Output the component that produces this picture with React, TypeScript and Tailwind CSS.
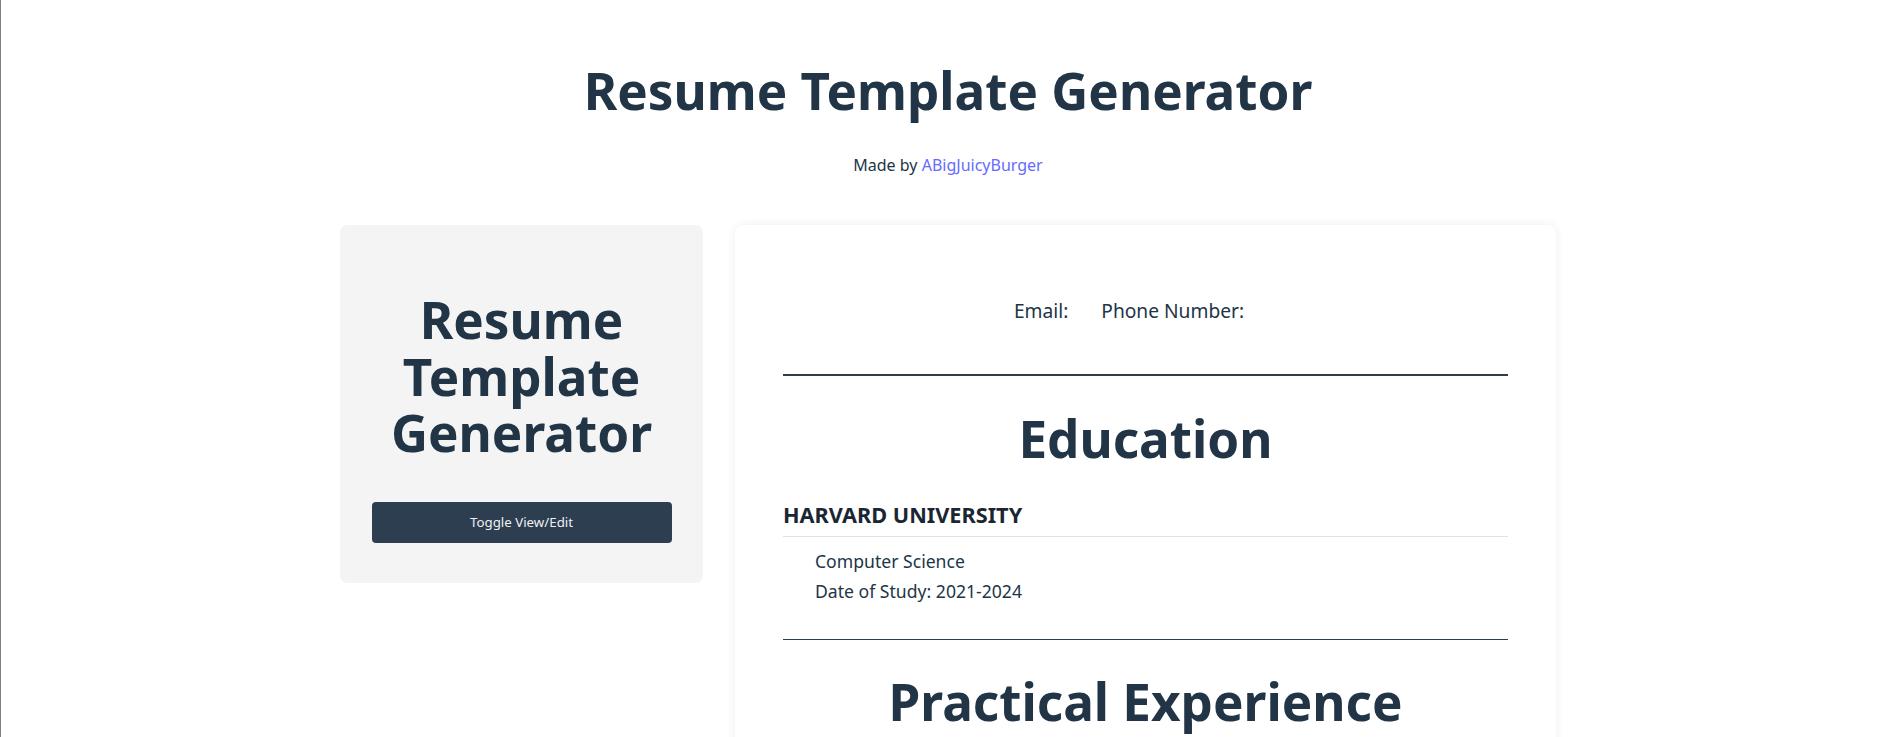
import { useState } from "react";

type School = {
  name: string;
  title: string;
  dates: string;
};

const schools: School[] = [
  {
    name: "HARVARD UNIVERSITY",
    title: "Computer Science",
    dates: "2021-2024",
  },
];

function SideBar({ onToggle }: { onToggle: () => void }) {
  return (
    <div className="flex w-[363px] shrink-0 flex-col items-center rounded-lg bg-[#f4f4f4] px-8 pt-[66px] pb-10">
      <h1 className="text-center text-[51.2px] font-bold leading-[1.1] text-[#213547]">
        Resume Template Generator
      </h1>
      <button
        type="button"
        onClick={onToggle}
        className="mt-[42px] h-[41px] w-[300px] rounded bg-[#2c3e50] text-[13.3px] text-[#f0f0f0]"
      >
        Toggle View/Edit
      </button>
    </div>
  );
}

function Resume() {
  return (
    <div className="w-[821px] shrink-0 rounded-lg bg-white px-12 pt-[72px] pb-10 shadow-[0_0_10px_rgba(0,0,0,0.07)]">
      {/* contact row, third slot (address) is empty */}
      <div className="flex justify-center gap-[33px] text-[19.2px] leading-[1.5] text-[#213547]">
        <span>Email:</span>
        <span>Phone Number:</span>
        <span></span>
      </div>

      <div className="mt-[48px] h-[2px] bg-[#2c3e50]" />

      <h1 className="mt-[34px] text-center text-[51.2px] font-bold leading-[1.1] text-[#213547]">
        Education
      </h1>

      {schools.map((s) => (
        <div key={s.name} className="mt-[33px]">
          <h3 className="border-b border-[#e2e2e2] pb-1 text-[21.7px] font-bold leading-[1.5] text-[#1b2633]">
            {s.name}
          </h3>
          <div className="mt-[9px] pl-8 text-[17.6px] leading-[30px] text-[#213547]">
            <p>{s.title}</p>
            <p>Date of Study: {s.dates}</p>
          </div>
        </div>
      ))}

      <div className="mt-[33px] h-px bg-[#2c3e50]" />

      <h1 className="mt-[33px] text-center text-[51.2px] font-bold leading-[1.1] text-[#213547]">
        Practical Experience
      </h1>
      <div className="h-40" />
    </div>
  );
}

export default function App() {
  const [editing, setEditing] = useState(false);

  return (
    <div
      className="min-h-screen border-l border-[#808080] bg-white pl-[10px] text-[#213547]"
      style={{ fontFamily: '"Noto Sans", "Open Sans", sans-serif' }}
    >
      <div className="flex flex-col items-center">
        <h1 className="mt-[62px] text-center text-[51.2px] font-bold leading-[1.1]">
          Resume Template Generator
        </h1>
        <p className="mt-[35px] text-base leading-6">
          Made by{" "}
          <a href="#" className="text-[#646cff]">
            ABigJuicyBurger
          </a>
        </p>

        <div className="mt-[48px] flex items-start gap-8" data-editing={editing}>
          <SideBar onToggle={() => setEditing((e) => !e)} />
          <Resume />
        </div>
      </div>
    </div>
  );
}
